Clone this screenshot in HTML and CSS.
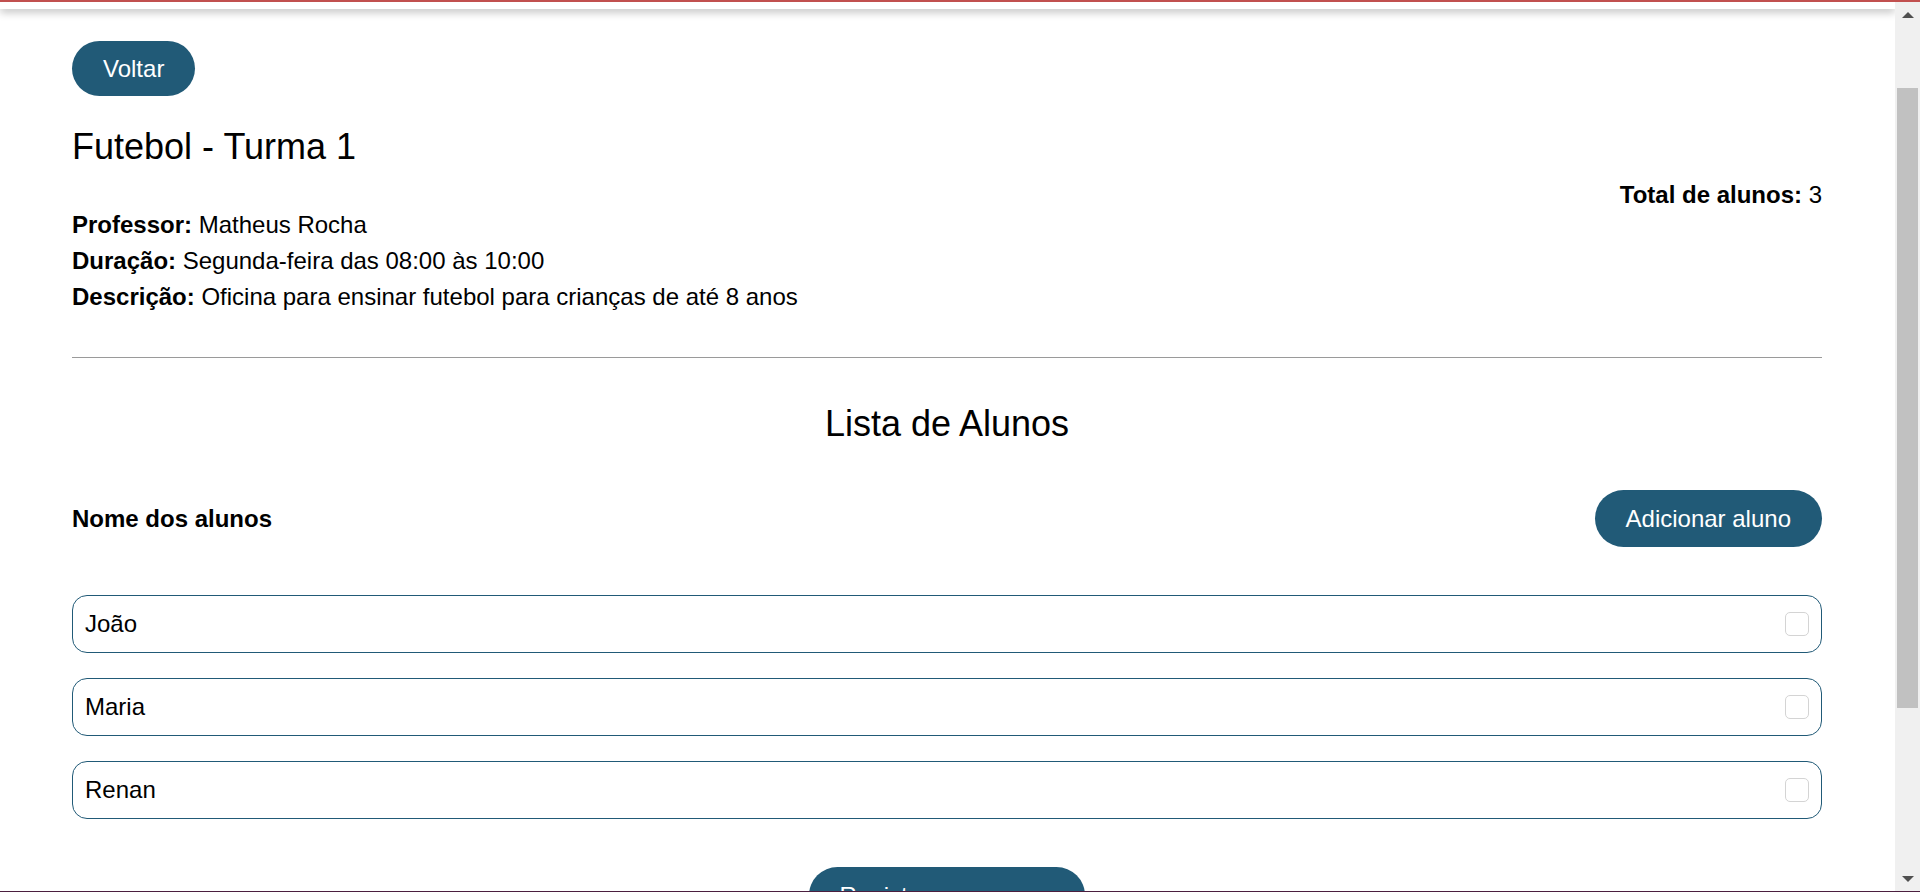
FILE: index.html
```html
<!DOCTYPE html>
<html lang="pt-BR">
<head>
<meta charset="utf-8">
<title>Futebol - Turma 1</title>
<link rel="stylesheet" href="styles.css">
</head>
<body>
<div class="frame">
  <div class="window">
    <div class="page">
      <div class="topbar"></div>
      <main class="content">
        <button class="btn btn-back" type="button">Voltar</button>
        <h1 class="title">Futebol - Turma 1</h1>
        <p class="total"><strong>Total de alunos:</strong> 3</p>
        <div class="info">
          <p><strong>Professor:</strong> Matheus Rocha</p>
          <p><strong>Duração:</strong> Segunda-feira das 08:00 às 10:00</p>
          <p><strong>Descrição:</strong> Oficina para ensinar futebol para crianças de até 8 anos</p>
        </div>
        <hr class="divider">
        <h2 class="list-title">Lista de Alunos</h2>
        <div class="list-head">
          <span class="list-label">Nome dos alunos</span>
          <button class="btn btn-add" type="button">Adicionar aluno</button>
        </div>
        <ul class="students">
          <li class="student"><span>João</span><input class="check" type="checkbox" aria-label="João"></li>
          <li class="student"><span>Maria</span><input class="check" type="checkbox" aria-label="Maria"></li>
          <li class="student"><span>Renan</span><input class="check" type="checkbox" aria-label="Renan"></li>
        </ul>
        <div class="actions">
          <button class="btn btn-save" type="button">Registrar presenças</button>
        </div>
      </main>
    </div>
    <div class="scrollbar">
      <div class="sb-btn"><svg width="12" height="6" viewBox="0 0 12 6"><polygon points="0,6 6,0 12,6" fill="#505050"/></svg></div>
      <div class="sb-track"><div class="sb-thumb"></div></div>
      <div class="sb-btn"><svg width="12" height="6" viewBox="0 0 12 6"><polygon points="0,0 12,0 6,6" fill="#505050"/></svg></div>
    </div>
  </div>
</div>
</body>
</html>
```
FILE: styles.css
```css
html, body {
  margin: 0;
  height: 100%;
  overflow: hidden;
}
body {
  font-family: "Liberation Sans", Arial, sans-serif;
  font-size: 24px;
  color: #000;
  background: #fff;
}
.frame {
  height: 892px;
  box-sizing: border-box;
  border-top: 2px solid #c1504f;
  border-bottom: 1px solid #4b1f3f;
  display: flex;
  flex-direction: column;
}
.window {
  flex: 1;
  min-height: 0;
  display: flex;
}
.page {
  flex: 1;
  min-width: 0;
  overflow: hidden;
  display: flex;
  flex-direction: column;
}
.topbar {
  height: 7px;
  flex-shrink: 0;
  background: #fff;
  box-shadow: 0 3px 8px rgba(0, 0, 0, 0.28);
  position: relative;
  z-index: 1;
}
.content {
  padding: 32px 73px 0 72px;
}
.btn {
  display: block;
  font-family: inherit;
  font-size: 24px;
  line-height: 28px;
  color: #fff;
  background: #215a77;
  border: none;
  border-radius: 29px;
  padding: 13.5px 31px;
  cursor: pointer;
}
.btn-add,
.btn-save {
  padding: 14.5px 31px;
}
.title {
  margin: 30px 0 0;
  font-size: 36px;
  line-height: 42px;
  font-weight: normal;
}
.total {
  margin: 15px 0 0;
  line-height: 24px;
  text-align: right;
}
.info p {
  margin: 0;
  line-height: 36px;
}
.divider {
  margin: 42px 0 0;
  height: 0;
  border: 0;
  border-top: 1px solid #9a9a9a;
}
.list-title {
  margin: 44.5px 0 0;
  font-size: 36px;
  line-height: 42px;
  font-weight: normal;
  text-align: center;
}
.list-head {
  margin-top: 45.5px;
  display: flex;
  justify-content: space-between;
  align-items: center;
}
.list-label {
  font-weight: bold;
  line-height: 28px;
}
.students {
  list-style: none;
  margin: 48px 0 0;
  padding: 0;
  display: flex;
  flex-direction: column;
  gap: 25px;
}
.student {
  height: 58px;
  box-sizing: border-box;
  border: 1px solid #215a77;
  border-radius: 15px;
  padding: 0 12px;
  display: flex;
  align-items: center;
  justify-content: space-between;
  line-height: 28px;
}
.check {
  appearance: none;
  -webkit-appearance: none;
  width: 24px;
  height: 24px;
  margin: 0;
  box-sizing: border-box;
  border: 1px solid #d4d4d4;
  border-radius: 5px;
  background: #fff;
}
.actions {
  margin-top: 48px;
  display: flex;
  justify-content: center;
}
.scrollbar {
  width: 25px;
  flex-shrink: 0;
  background: #f0f0f0;
  display: flex;
  flex-direction: column;
}
.sb-btn {
  height: 25px;
  flex-shrink: 0;
  display: flex;
  align-items: center;
  justify-content: center;
}
.sb-track {
  flex: 1;
  padding: 61px 2px 0;
}
.sb-thumb {
  height: 620px;
  background: #c1c1c1;
}
```
